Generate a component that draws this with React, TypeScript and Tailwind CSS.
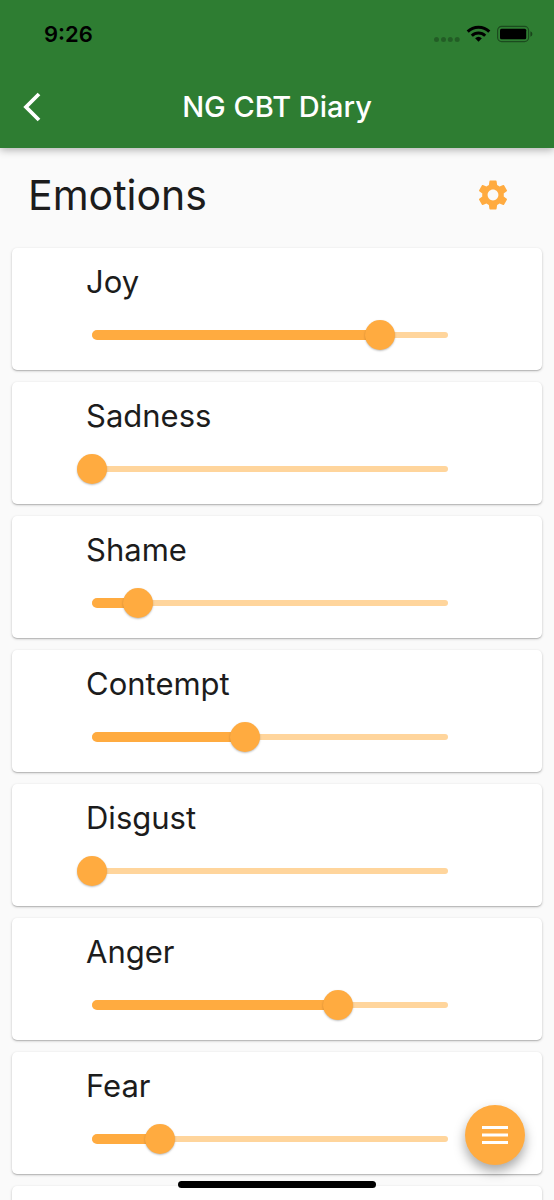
import { useState } from "react";
import { MdSettings } from "react-icons/md";

interface Emotion {
  id: string;
  name: string;
  value: number;
}

interface EmotionCardProps {
  emotion: Emotion;
  onChange: (id: string, value: number) => void;
}

const initialEmotions: Emotion[] = [
  { id: "joy", name: "Joy", value: 81 },
  { id: "sadness", name: "Sadness", value: 0 },
  { id: "shame", name: "Shame", value: 13 },
  { id: "contempt", name: "Contempt", value: 43 },
  { id: "disgust", name: "Disgust", value: 0 },
  { id: "anger", name: "Anger", value: 69 },
  { id: "fear", name: "Fear", value: 19 },
];

function StatusBar() {
  return (
    <div className="flex h-[68px] items-center justify-between pl-11 pr-[21px] text-black">
      <span className="text-[22px] font-semibold leading-7">9:26</span>
      <svg width="100" height="20" viewBox="0 0 100 20" aria-hidden="true">
        <g fill="#000" fillOpacity="0.25">
          <circle cx="3.5" cy="15.5" r="2.5" />
          <circle cx="10.5" cy="15.5" r="2.5" />
          <circle cx="17.3" cy="15.5" r="2.5" />
          <circle cx="24.2" cy="15.5" r="2.5" />
        </g>
        <g fill="none" stroke="#000" strokeWidth="3">
          <path d="M34.7 7.6a15.4 15.4 0 0 1 21.6 0" />
          <path d="M38.8 11.7a9.6 9.6 0 0 1 13.4 0" />
        </g>
        <path d="M45.5 17.8l-3.4-3.5a5 5 0 0 1 6.8 0z" fill="#000" />
        <rect
          x="64.6"
          y="2.4"
          width="31"
          height="15.2"
          rx="4"
          fill="none"
          stroke="#000"
          strokeOpacity="0.4"
          strokeWidth="1.2"
        />
        <rect x="67" y="4.8" width="26.2" height="10.4" rx="1.5" fill="#000" />
        <path d="M97.4 7.2q2 .8 2 2.8t-2 2.8z" fill="#000" fillOpacity="0.45" />
      </svg>
    </div>
  );
}

function AppBar() {
  return (
    <header className="relative z-10 shrink-0 bg-[#2e7d32] shadow-[0_2px_8px_rgba(0,0,0,0.3)]">
      <StatusBar />
      <div className="grid h-20 grid-cols-[64px_1fr_64px] items-center pb-0.5">
        <button
          type="button"
          aria-label="Back"
          className="flex h-12 w-16 items-center justify-center"
        >
          <svg width="20" height="30" viewBox="0 0 20 30" aria-hidden="true">
            <path
              d="M17 2L4 15l13 13"
              fill="none"
              stroke="#fff"
              strokeWidth="3.8"
            />
          </svg>
        </button>
        <h1 className="text-center text-[29px] font-medium leading-9 text-white">
          NG CBT Diary
        </h1>
      </div>
    </header>
  );
}

function EmotionCard({ emotion, onChange }: EmotionCardProps) {
  return (
    <li className="rounded-[5px] bg-white pb-5 pl-[65px] pr-[79px] pt-4 shadow-[0_1px_3px_rgba(0,0,0,0.2),0_1px_1px_rgba(0,0,0,0.15)]">
      <label
        htmlFor={emotion.id}
        className="block pl-[9px] text-[31px] leading-9"
      >
        {emotion.name}
      </label>
      <div className="mt-5 grid items-center">
        <div className="col-start-1 row-start-1 mx-[15px] h-1.5 rounded-full bg-[#ffd59c]" />
        <div className="col-start-1 row-start-1 mx-[15px]">
          <div
            className="h-2.5 rounded-full bg-[#ffab40]"
            style={{ width: `${emotion.value}%` }}
          />
        </div>
        <input
          id={emotion.id}
          type="range"
          min={0}
          max={100}
          value={emotion.value}
          onChange={(e) => onChange(emotion.id, Number(e.target.value))}
          className="z-0 col-start-1 row-start-1 h-[30px] w-full cursor-pointer appearance-none bg-transparent [&::-webkit-slider-thumb]:h-[30px] [&::-webkit-slider-thumb]:w-[30px] [&::-webkit-slider-thumb]:appearance-none [&::-webkit-slider-thumb]:rounded-full [&::-webkit-slider-thumb]:bg-[#ffab40] [&::-webkit-slider-thumb]:shadow-[0_1px_2px_rgba(0,0,0,0.25)]"
        />
      </div>
    </li>
  );
}

export default function App() {
  const [emotions, setEmotions] = useState(initialEmotions);

  const updateEmotion = (id: string, value: number) => {
    setEmotions(emotions.map((e) => (e.id === id ? { ...e, value } : e)));
  };

  return (
    <div className="flex h-screen flex-col overflow-hidden bg-[#fafafa] font-[Inter,sans-serif] text-[#1c1c1c]">
      <AppBar />

      <main className="min-h-0 flex-1 overflow-y-auto px-3 [scrollbar-width:none]">
        <div className="flex items-center justify-between pb-[29px] pl-4 pr-[31px] pt-[23px]">
          <h2 className="text-[41px] leading-[48px]">Emotions</h2>
          <button type="button" aria-label="Settings">
            <MdSettings className="h-9 w-9 text-[#ffab40]" />
          </button>
        </div>
        <ul className="flex flex-col gap-3">
          {emotions.map((emotion) => (
            <EmotionCard
              key={emotion.id}
              emotion={emotion}
              onChange={updateEmotion}
            />
          ))}
          <li className="h-[122px] rounded-[5px] bg-white shadow-[0_1px_3px_rgba(0,0,0,0.2),0_1px_1px_rgba(0,0,0,0.15)]" />
        </ul>
      </main>

      <button
        type="button"
        aria-label="Open menu"
        className="fixed bottom-[35px] right-[29px] z-10 flex h-[60px] w-[60px] items-center justify-center rounded-full bg-[#ffab40] shadow-[0_6px_12px_rgba(0,0,0,0.35)]"
      >
        <svg width="26" height="18" viewBox="0 0 26 18" aria-hidden="true">
          <path d="M0 0h26v3H0zM0 7.5h26v3H0zM0 15h26v3H0z" fill="#fff" />
        </svg>
      </button>

      {/* home indicator */}
      <div className="fixed inset-x-0 bottom-3 z-10 mx-auto h-[7px] w-[198px] rounded-full bg-black" />
    </div>
  );
}
